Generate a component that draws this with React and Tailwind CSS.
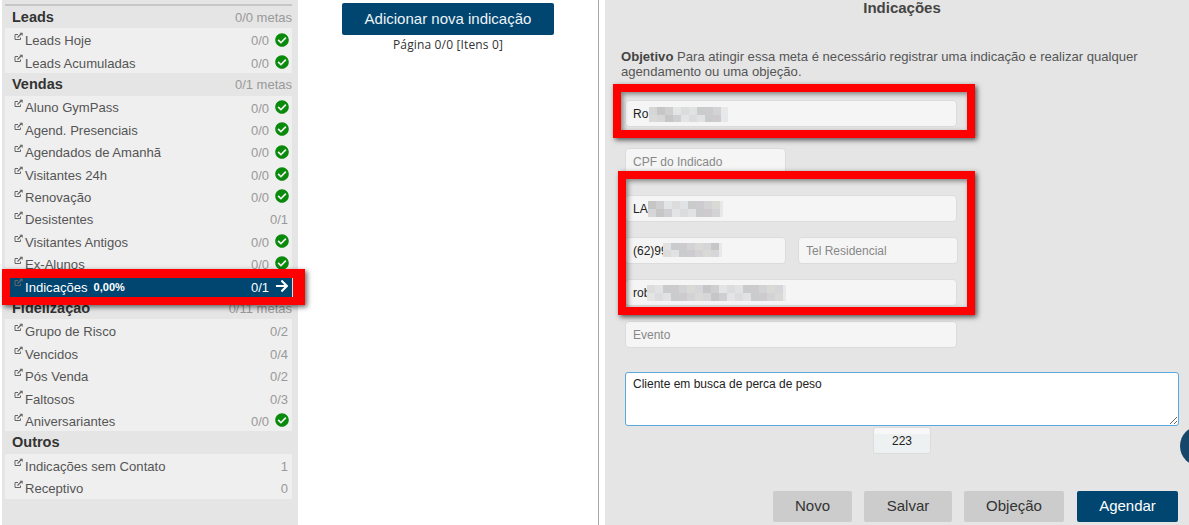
import { FaArrowRight, FaCheckCircle } from 'react-icons/fa';

const sections = [
  {
    title: 'Leads',
    metas: '0/0 metas',
    rows: [
      { label: 'Leads Hoje', count: '0/0', done: true },
      { label: 'Leads Acumuladas', count: '0/0', done: true },
    ],
  },
  {
    title: 'Vendas',
    metas: '0/1 metas',
    rows: [
      { label: 'Aluno GymPass', count: '0/0', done: true },
      { label: 'Agend. Presenciais', count: '0/0', done: true },
      { label: 'Agendados de Amanhã', count: '0/0', done: true },
      { label: 'Visitantes 24h', count: '0/0', done: true },
      { label: 'Renovação', count: '0/0', done: true },
      { label: 'Desistentes', count: '0/1' },
      { label: 'Visitantes Antigos', count: '0/0', done: true },
      { label: 'Ex-Alunos', count: '0/0', done: true },
      { label: 'Indicações', count: '0/1', active: true, percent: '0,00%' },
    ],
  },
  {
    title: 'Fidelização',
    metas: '0/11 metas',
    rows: [
      { label: 'Grupo de Risco', count: '0/2' },
      { label: 'Vencidos', count: '0/4' },
      { label: 'Pós Venda', count: '0/2' },
      { label: 'Faltosos', count: '0/3' },
      { label: 'Aniversariantes', count: '0/0', done: true },
    ],
  },
  {
    title: 'Outros',
    rows: [
      { label: 'Indicações sem Contato', count: '1' },
      { label: 'Receptivo', count: '0' },
    ],
  },
];

const shades = ['#d6d6d8', '#cdcbcd', '#dcdcdc', '#c6c6c6', '#d3d3d5', '#e0e2e4', '#cfced0', '#d9d9d6', '#cacccc', '#e2e4e6'];

function LinkIcon() {
  return (
    <svg width="10" height="9" viewBox="0 0 10 9" fill="none" className="mb-[6px] mr-px shrink-0 text-[#666]" stroke="currentColor">
      <path d="M6.5 5.5v2h-5.5v-5h3" strokeWidth="1" />
      <path d="M3.5 5.5l4-4" strokeWidth="1.2" />
      <path d="M5.5 .8h3.2v3.2z" fill="currentColor" stroke="none" />
    </svg>
  );
}

function MenuRow({ row }) {
  return (
    <div
      className={`flex h-[22.4px] items-center pl-[9px] pr-[4px] ${
        row.active ? 'bg-[#004671] text-white' : 'bg-[#efefef] text-[#555]'
      }`}
    >
      <LinkIcon />
      <span className="whitespace-nowrap pt-[3px] text-[13.1px]">{row.label}</span>
      {row.percent && <span className="ml-[6px] pt-[3px] text-[11px] font-bold">{row.percent}</span>}
      <span className={`ml-auto pt-[3px] ${row.active ? 'text-white' : 'text-[#999]'}`}>{row.count}</span>
      {row.done && <FaCheckCircle className="ml-[6px] mr-[-1px] text-[14px] text-[#0a8a0a]" />}
      {row.active && <FaArrowRight className="ml-[6px] mr-[-1px] text-[14px] text-white" />}
    </div>
  );
}

function Sidebar() {
  return (
    <aside className="ml-[2px] h-[525px] w-[296px] shrink-0 bg-[#e5e5e5] pl-[3px] pr-[6px] pt-[4px] text-[13px]">
      <div className="h-[2px] bg-[#c6c6c6]" />
      {sections.map((section) => (
        <div key={section.title}>
          <div className="flex h-[22.4px] items-center justify-between pl-[7px]">
            <span className="pt-px text-[14.5px] font-bold text-[#333]">{section.title}</span>
            {section.metas && <span className="pt-px text-[#999]">{section.metas}</span>}
          </div>
          {section.rows.map((row) => (
            <MenuRow key={row.label} row={row} />
          ))}
        </div>
      ))}
    </aside>
  );
}

// pixelated block that hides personal data in the screenshot
function Censor({ left, width, top, height, offset = 0 }) {
  const cols = Math.ceil(width / 8);
  return (
    <svg
      width={width}
      height={height}
      className="absolute"
      style={{ left, top }}
      shapeRendering="crispEdges"
    >
      {[0, 1].map((r) =>
        Array.from({ length: cols }).map((_, c) => (
          <rect
            key={`${r}-${c}`}
            x={c * 8}
            y={(r * height) / 2}
            width="8"
            height={height / 2}
            fill={c >= cols - 1 ? '#e6e8ea' : shades[(c * 3 + r * 7 + offset) % shades.length]}
          />
        )),
      )}
    </svg>
  );
}

function Field({ value, placeholder, className = 'w-full', censor }) {
  return (
    <div className={`relative h-[27px] ${className}`}>
      <input
        readOnly
        value={value || ''}
        placeholder={placeholder}
        className="h-full w-full rounded-[4px] border border-[#dcdcdc] bg-[#f5f5f5] px-[7px] text-[12px] text-[#222] outline-none placeholder:text-[#888]"
      />
      {censor}
    </div>
  );
}

function ActionButton({ children, primary, className }) {
  return (
    <button
      className={`h-[31px] rounded-[2px] text-[15px] ${
        primary ? 'bg-[#004671] text-white' : 'bg-[#cccccc] text-[#333]'
      } ${className}`}
    >
      {children}
    </button>
  );
}

function RedBox({ className }) {
  return (
    <div
      className={`pointer-events-none absolute border-[8px] border-[#ff0000] shadow-[2px_2px_5px_rgba(0,0,0,0.65),inset_2px_2px_5px_rgba(0,0,0,0.45)] ${className}`}
    />
  );
}

export default function App() {
  return (
    <div className="relative flex h-[525px] w-[1189px] overflow-hidden bg-white font-['Liberation_Sans',Arial,sans-serif]">
      <Sidebar />

      <main className="flex w-[300px] shrink-0 flex-col items-center pt-[3px]">
        <button className="h-[32px] w-[212px] rounded-[2px] bg-[#004671] text-[15px] text-[#eef3f6]">
          Adicionar nova indicação
        </button>
        <p className="mt-[3px] font-['Open_Sans',sans-serif] text-[12px] leading-[14px] tracking-[0.15px] text-[#333]">
          Página 0/0 [Itens 0]
        </p>
      </main>

      <div className="h-[525px] w-px bg-[#a8a8a8]" />

      <section className="relative ml-[6px] h-[525px] grow bg-[#e5e5e5] pl-[20px] pr-[10px]">
        <h2 className="h-[15px] text-center text-[15px] font-bold leading-[15px] text-[#444]">Indicações</h2>
        <p className="ml-[-4px] mt-[34px] w-[540px] text-[13.1px] leading-[15px] text-[#555]">
          <b className="text-[#444]">Objetivo</b> Para atingir essa meta é necessário registrar uma indicação e realizar
          qualquer agendamento ou uma objeção.
        </p>

        <Field value="Ro" className="mt-[21px] w-[332px]" censor={<Censor left={24} top={7} width={79} height={15} />} />
        <Field placeholder="CPF do Indicado" className="mt-[21px] w-[161px]" />
        <Field value="LA" className="mt-[20px] w-[332px]" censor={<Censor left={23} top={6} width={75} height={16} offset={3} />} />
        <div className="mt-[15px] flex gap-[12px]">
          <Field value="(62)99" className="w-[161px]" censor={<Censor left={38} top={6} width={59} height={14} offset={5} />} />
          <Field placeholder="Tel Residencial" className="w-[160px]" />
        </div>
        <Field value="rob" className="mt-[15px] w-[332px]" censor={<Censor left={22} top={6} width={139} height={16} offset={2} />} />
        <Field placeholder="Evento" className="mt-[15px] w-[332px]" />

        <textarea
          readOnly
          value="Cliente em busca de perca de peso"
          className="mt-[24px] block h-[54px] w-full rounded-[3px] border border-[#5aa9dd] bg-white px-[7px] py-[4px] text-[12px] leading-[15px] text-[#222] outline-none"
        />
        <div className="mx-auto mt-px flex h-[27px] w-[58px] items-center justify-center rounded-[3px] border border-[#dcdcdc] bg-[linear-gradient(#f7f7f7_0,#f7f7f7_25%,#eef1f1_25%)] text-[12px] text-[#222]">
          223
        </div>

        <div className="mt-[37px] flex justify-end gap-[12px] pr-px">
          <ActionButton className="w-[79px]">Novo</ActionButton>
          <ActionButton className="w-[88px]">Salvar</ActionButton>
          <ActionButton className="w-[100px]">Objeção</ActionButton>
          <ActionButton primary className="ml-px w-[101px]">
            Agendar
          </ActionButton>
        </div>

        <RedBox className="left-[8px] top-[84px] h-[54px] w-[362px]" />
        <RedBox className="left-[13px] top-[171px] h-[144px] w-[357px]" />
        <div className="absolute left-[575px] top-[426px] h-[40px] w-[40px] rounded-full bg-[#17466b]" />
      </section>

      <div className="pointer-events-none absolute left-[2px] top-[269px] h-[36px] w-[303px] border-b-[8px] border-l-[8px] border-r-[12px] border-t-[9px] border-[#ff0000] shadow-[2px_2px_5px_rgba(0,0,0,0.6)]" />
    </div>
  );
}
